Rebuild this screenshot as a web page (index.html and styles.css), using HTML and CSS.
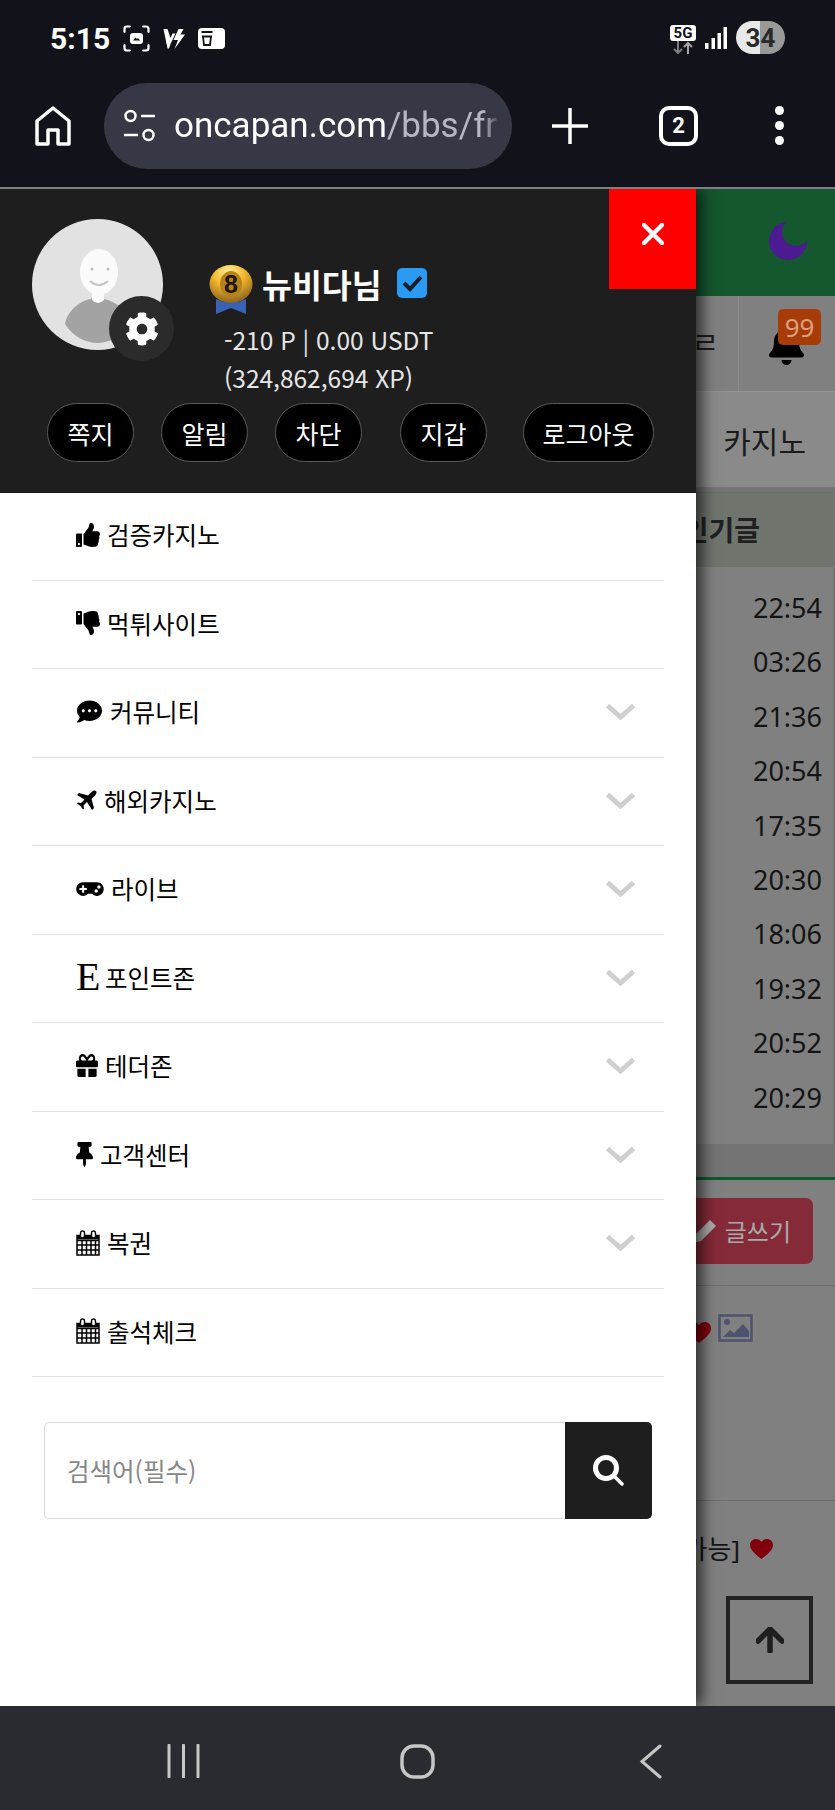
FILE: index.html
```html
<!DOCTYPE html>
<html lang="ko">
<head>
    <meta charset="UTF-8">
    <meta name="viewport" content="width=device-width, initial-scale=1.0">
    <title>oncapan</title>
    <link rel="stylesheet" href="styles.css">
</head>
<body>
    <svg class="defs" width="0" height="0">
        <symbol id="thumb" viewBox="0 0 512 512"><path d="M104 224H24c-13.255 0-24 10.745-24 24v240c0 13.255 10.745 24 24 24h80c13.255 0 24-10.745 24-24V248c0-13.255-10.745-24-24-24zM64 472c-13.255 0-24-10.745-24-24s10.745-24 24-24 24 10.745 24 24-10.745 24-24 24zM384 81.452c0 42.416-25.97 66.208-33.277 94.548h101.723c33.397 0 59.397 27.746 59.553 58.098.084 17.938-7.546 37.249-19.439 49.197l-.11.11c9.836 23.337 8.237 56.037-9.308 79.469 8.681 25.895-.069 57.704-16.382 74.757 4.298 17.598 2.244 32.575-6.148 44.632C440.202 511.587 389.616 512 346.839 512l-2.845-.001c-48.287-.017-87.806-17.598-119.56-31.725-15.957-7.099-36.821-15.887-52.651-16.178-6.54-.12-11.783-5.457-11.783-11.998v-213.77c0-3.2 1.282-6.271 3.558-8.521 39.614-39.144 56.648-80.587 89.117-113.111 14.804-14.832 20.188-37.236 25.393-58.902C282.515 39.293 291.817 0 312 0c24 0 72 8 72 81.452z"/></symbol>
        <symbol id="calendar" viewBox="0 0 24 26"><path d="M1 5.500h22v19.500H1z M1 10.500h22 M1 15h22 M1 20h22 M6 10.500V25 M10.500 10.500V25 M15 10.500V25 M19.500 10.500V25" fill="none" stroke="#000" stroke-width="1.500"/><path d="M1 5.500h22v4H1z" fill="#000"/><rect x="4.500" y="1" width="4" height="7" rx="2" fill="#fff" stroke="#000" stroke-width="1.400"/><rect x="15.500" y="1" width="4" height="7" rx="2" fill="#fff" stroke="#000" stroke-width="1.400"/></symbol>
        <symbol id="chevron" viewBox="0 0 31 17"><path d="M2.500 2.500L15.500 14 28.500 2.500" fill="none" stroke="#cfcfcf" stroke-width="5"/></symbol>
        <symbol id="heart" viewBox="0 0 24 21"><path d="M12 21C4 14.500 0 11 0 6.200 0 2.600 2.700 0 6.200 0 8.500 0 10.700 1.100 12 3 13.300 1.100 15.500 0 17.800 0 21.300 0 24 2.600 24 6.200 24 11 20 14.500 12 21z"/></symbol>
    </svg>

    <div class="statusbar">
        <div class="status-left">
            <span class="clock">5:15</span>
            <svg width="27" height="27" viewBox="0 0 27 27"><path d="M7 1.500H4Q1.500 1.500 1.500 4v3M20 1.500h3q2.500 0 2.500 2.500v3M7 25.500H4Q1.500 25.500 1.500 23v-3M20 25.500h3q2.500 0 2.500-2.500v-3" fill="none" stroke="#fff" stroke-width="2.200" stroke-linecap="round"/><rect x="7" y="8" width="13" height="11" rx="3" fill="#fff"/><path d="M10 15.500l2.500-3 1.500 1.500 1-1 2 2.500z" fill="#12131a"/></svg>
            <svg width="24" height="22" viewBox="0 0 23 22"><path d="M1 2h4l3 9 2-4.500 3 0-5 10.500-1.500 4.500H5z" fill="#fff"/><path d="M16 2h5l-3 5.500h4.500L12 22l3.500-9H11z" fill="#fff"/></svg>
            <svg width="27" height="21" viewBox="0 0 27 21"><rect width="27" height="21" rx="4" fill="#fff"/><path d="M3.500 4h11M4 8.500h10M5 8.500l1 8.500h6l1-8.500" fill="none" stroke="#12131a" stroke-width="1.800"/></svg>
        </div>
        <div class="status-right">
            <div class="net">
                <span class="net-5g">5G</span>
                <svg width="24" height="13" viewBox="0 0 24 13"><path d="M7 0v12M3 8l4 4 4-4" fill="none" stroke="#7c7c7c" stroke-width="2"/><path d="M17 13V2M13 6l4-4 4 4" fill="none" stroke="#a4a4a4" stroke-width="2"/></svg>
            </div>
            <svg width="22" height="22" viewBox="0 0 22 22"><path d="M0 16h3.500v6H0zM6.500 11H10v11H6.500zM12.500 6H16v16h-3.500zM18.500 0H22v22h-3.500z" fill="#fff"/></svg>
            <div class="battery"><span>34</span></div>
        </div>
    </div>

    <div class="toolbar">
        <svg width="36" height="40" viewBox="0 0 36 40"><path d="M2 38V15L18 2l16 13v23H23V24H13v14z" fill="none" stroke="#fff" stroke-width="3.500" stroke-linejoin="round"/></svg>
        <div class="urlbar">
            <svg width="31" height="34" viewBox="0 0 31 34"><circle cx="6.500" cy="7" r="5" fill="none" stroke="#fff" stroke-width="2.500"/><path d="M17 7h14M0 26h14" stroke="#fff" stroke-width="2.500"/><circle cx="24.500" cy="26" r="5" fill="none" stroke="#fff" stroke-width="2.500"/></svg>
            <div class="url"><span class="url-host">oncapan.com</span><span class="url-path">/bbs/fr</span></div>
        </div>
        <svg class="tb-plus" width="36" height="36" viewBox="0 0 36 36"><path d="M18 0v36M0 18h36" stroke="#fff" stroke-width="3.500" stroke-linecap="round"/></svg>
        <div class="tabs">2</div>
        <div class="dots"><i></i><i></i><i></i></div>
    </div>

    <div class="page">
        <div class="behind">
            <div class="site-head">
                <svg width="38" height="38" viewBox="0 0 38 38"><circle cx="19" cy="19" r="19" fill="#4c1a91"/><circle cx="27" cy="10" r="14" fill="#15572f"/></svg>
            </div>
            <div class="site-nav">
                <div class="nav-cell">ㄹ</div>
                <div class="nav-bell">
                    <svg width="37" height="40" viewBox="0 0 448 512"><path d="M224 512c35.32 0 63.97-28.65 63.97-64H160.03c0 35.35 28.65 64 63.97 64zm215.39-149.71c-19.32-20.76-55.47-51.99-55.47-154.29 0-77.7-54.48-139.9-127.94-155.16V32c0-17.67-14.32-32-31.98-32s-31.98 14.33-31.98 32v20.84C118.56 68.1 64.08 130.3 64.08 208c0 102.3-36.15 133.53-55.47 154.29-6 6.45-8.66 14.16-8.61 21.71.11 16.4 12.98 32 32.1 32h383.8c19.12 0 32-15.6 32.1-32 .05-7.55-2.61-15.27-8.61-21.71z"/></svg>
                    <span class="badge">99</span>
                </div>
            </div>
            <div class="site-cat">카지노</div>
            <div class="panel">
                <div class="panel-title">인기글</div>
                <div class="times">
                    <div>22:54</div>
                    <div>03:26</div>
                    <div>21:36</div>
                    <div>20:54</div>
                    <div>17:35</div>
                    <div>20:30</div>
                    <div>18:06</div>
                    <div>19:32</div>
                    <div>20:52</div>
                    <div>20:29</div>
                </div>
            </div>
            <div class="board">
                <div class="board-top">
                    <div class="write-btn">
                        <svg width="24" height="24" viewBox="0 0 24 24"><path d="M17 1l6 6L8 22l-8 2 2-8z" fill="#aaa"/></svg>
                        글쓰기
                    </div>
                </div>
                <div class="post post-first">
                    <svg class="heart" width="24" height="21"><use href="#heart"/></svg>
                    <svg width="35" height="28" viewBox="0 0 35 28"><rect x="1.500" y="1.500" width="32" height="25" fill="none" stroke="#4d536c" stroke-width="2.500"/><circle cx="9" cy="8" r="3" fill="#4d536c"/><path d="M5 23l7-7 4 3 9-9 6 7v6z" fill="#4d536c"/></svg>
                </div>
                <div class="post">
                    <span>[수정가능]</span>
                    <svg class="heart" width="23" height="20"><use href="#heart"/></svg>
                </div>
            </div>
        </div>

        <div class="top-btn">
            <svg width="28" height="26" viewBox="0 0 28 26"><path d="M14 2L2 14M14 2l12 12M14 3v21" fill="none" stroke="#1e1e1e" stroke-width="5.500" stroke-linecap="round" stroke-linejoin="round"/></svg>
        </div>

        <aside class="drawer">
            <div class="drawer-head">
                <a class="close-btn"><svg width="22" height="22" viewBox="0 0 22 22"><path d="M2 2l18 18M20 2L2 20" stroke="#fff" stroke-width="4.500" stroke-linecap="round"/></svg></a>
                <div class="profile">
                    <div class="avatar">
                        <svg width="131" height="131" viewBox="0 0 131 131">
                            <circle cx="65.500" cy="65.500" r="65.500" fill="#e2e2e2"/>
                            <path d="M33 105c2-14 18-26 32-26s32 12 34 26c-10 14-24 19-34 19s-24-6-32-19z" fill="#a3a3a3"/>
                            <path d="M60 70h12v11q-6 6-12 0z" fill="#fbfbfb"/>
                            <ellipse cx="67" cy="53" rx="19" ry="23" fill="#fbfbfb"/>
                            <circle cx="60" cy="50" r="1.500" fill="#bbb"/><circle cx="76" cy="50" r="1.500" fill="#bbb"/>
                            <path d="M58 62q9 8 18 0" fill="none" stroke="#c4c4c4" stroke-width="2"/>
                        </svg>
                        <div class="gear">
                            <svg width="34" height="34" viewBox="0 0 512 512"><path fill="#fff" d="M487.4 315.7l-42.6-24.6c4.3-23.2 4.3-47 0-70.2l42.6-24.6c4.9-2.8 7.1-8.6 5.5-14-11.1-35.6-30-67.8-54.7-94.6-3.8-4.1-10-5.1-14.8-2.3L380.800 110c-17.900-15.400-38.500-27.300-60.800-35.100V25.800c0-5.600-3.900-10.500-9.400-11.700-36.700-8.200-74.300-7.800-109.200 0-5.500 1.200-9.400 6.100-9.400 11.700V75c-22.200 7.900-42.800 19.800-60.800 35.100L88.700 85.500c-4.900-2.800-11-1.900-14.800 2.300-24.700 26.700-43.600 58.900-54.700 94.600-1.700 5.400.6 11.200 5.500 14L67.300 221c-4.300 23.200-4.300 47 0 70.200l-42.600 24.600c-4.900 2.800-7.100 8.600-5.500 14 11.100 35.600 30 67.800 54.700 94.600 3.800 4.100 10 5.100 14.800 2.300l42.600-24.600c17.900 15.400 38.500 27.300 60.800 35.100v49.200c0 5.600 3.900 10.500 9.400 11.700 36.700 8.200 74.300 7.800 109.200 0 5.500-1.200 9.400-6.100 9.400-11.700v-49.200c22.200-7.900 42.800-19.800 60.800-35.100l42.600 24.600c4.900 2.800 11 1.900 14.800-2.300 24.700-26.700 43.600-58.900 54.700-94.600 1.500-5.500-.7-11.300-5.600-14.100zM256 336c-44.100 0-80-35.900-80-80s35.900-80 80-80 80 35.900 80 80-35.900 80-80 80z"/></svg>
                        </div>
                    </div>
                    <div class="user">
                        <div class="user-name">
                            <svg class="medal" width="44" height="50" viewBox="0 0 44 50">
                                <defs><radialGradient id="gold" cx="45%" cy="20%" r="80%"><stop offset="0" stop-color="#fff3a0"/><stop offset=".45" stop-color="#f4b82c"/><stop offset="1" stop-color="#8a6420"/></radialGradient></defs>
                                <path d="M7 34l8 3h14l8-3v15l-15-6-15 6z" fill="#3a62b4"/>
                                <ellipse cx="22" cy="19" rx="21.500" ry="19" fill="url(#gold)"/>
                                <ellipse cx="22" cy="19" rx="11" ry="13" fill="#b8821a"/>
                                <text x="22" y="28" class="medal-num">8</text>
                            </svg>
                            <span>뉴비다님</span>
                            <svg class="verified" width="30" height="30" viewBox="0 0 30 30"><rect width="30" height="30" rx="5" fill="#2b9af3"/><path d="M7 15l6 6L24 9" fill="none" stroke="#14202c" stroke-width="4"/></svg>
                        </div>
                        <div class="user-stats">
                            <div>-210 P | 0.00 USDT</div>
                            <div>(324,862,694 XP)</div>
                        </div>
                    </div>
                </div>
                <div class="pills">
                    <a class="pill">쪽지</a>
                    <a class="pill">알림</a>
                    <a class="pill">차단</a>
                    <a class="pill pill-wallet">지갑</a>
                    <a class="pill pill-out">로그아웃</a>
                </div>
            </div>

            <ul class="menu">
                <li><svg width="24" height="24"><use href="#thumb"/></svg>검증카지노</li>
                <li><svg class="flip" width="24" height="24"><use href="#thumb"/></svg>먹튀사이트</li>
                <li><svg width="27" height="25" viewBox="0 0 512 512"><path d="M256 32C114.6 32 0 125.1 0 240c0 49.6 21.4 95 57 130.7C44.5 421.1 2.7 466 2.2 466.5c-2.2 2.3-2.8 5.7-1.500 8.700S4.800 480 8 480c66.300 0 116-31.800 140.600-51.400 32.700 12.300 69 19.400 107.400 19.400 141.400 0 256-93.100 256-208S397.400 32 256 32zM128 272c-17.700 0-32-14.300-32-32s14.300-32 32-32 32 14.300 32 32-14.300 32-32 32zm128 0c-17.700 0-32-14.300-32-32s14.300-32 32-32 32 14.300 32 32-14.300 32-32 32zm128 0c-17.700 0-32-14.300-32-32s14.300-32 32-32 32 14.300 32 32-14.300 32-32 32z"/></svg>커뮤니티<svg class="chev" width="31" height="17"><use href="#chevron"/></svg></li>
                <li><svg width="21" height="21" viewBox="0 0 21 21"><path d="M20 1c-1-1-3-.5-4.500 1L12 5.500 3 3 1 5l7.500 4.500-3.500 3.500-3-.5-1 1 3.500 2.500 2.500 3.500 1-1-.5-3 3.500-3.500L16 20l2-2-2.500-9L19 5.500C20.500 4 21 2 20 1z"/></svg>해외카지노<svg class="chev" width="31" height="17"><use href="#chevron"/></svg></li>
                <li><svg width="28" height="22" viewBox="0 0 640 512"><path d="M480.070 96H160a160 160 0 1 0 114.240 272h91.520A160 160 0 1 0 480.070 96zM248 268a12 12 0 0 1-12 12h-52v52a12 12 0 0 1-12 12h-24a12 12 0 0 1-12-12v-52H84a12 12 0 0 1-12-12v-24a12 12 0 0 1 12-12h52v-52a12 12 0 0 1 12-12h24a12 12 0 0 1 12 12v52h52a12 12 0 0 1 12 12zm216 76a40 40 0 1 1 40-40 40 40 0 0 1-40 40zm64-96a40 40 0 1 1 40-40 40 40 0 0 1-40 40z"/></svg>라이브<svg class="chev" width="31" height="17"><use href="#chevron"/></svg></li>
                <li><span class="letter-icon">E</span>포인트존<svg class="chev" width="31" height="17"><use href="#chevron"/></svg></li>
                <li><svg width="22" height="23" viewBox="0 32 512 448" preserveAspectRatio="none"><path d="M32 448c0 17.700 14.300 32 32 32h160V320H32v128zm256 32h160c17.700 0 32-14.300 32-32V320H288v160zm192-320h-42.100c6.200-12.100 10.100-25.500 10.100-40 0-48.500-39.500-88-88-88-41.600 0-68.500 21.300-103 68.300-34.500-47-61.400-68.300-103-68.300-48.500 0-88 39.500-88 88 0 14.500 3.800 27.900 10.100 40H32c-17.700 0-32 14.300-32 32v80c0 8.800 7.200 16 16 16h480c8.800 0 16-7.200 16-16v-80c0-17.700-14.300-32-32-32zm-326.100 0c-22.100 0-40-17.900-40-40s17.900-40 40-40c19.900 0 34.600 3.300 86.100 80h-86.100zm206.100 0h-86.100c51.400-76.500 65.700-80 86.100-80 22.100 0 40 17.900 40 40s-17.900 40-40 40z"/></svg>테더존<svg class="chev" width="31" height="17"><use href="#chevron"/></svg></li>
                <li><svg width="17" height="25" viewBox="0 0 384 512" preserveAspectRatio="none"><path d="M298.028 214.267L285.793 96H328c13.255 0 24-10.745 24-24V24c0-13.255-10.745-24-24-24H56C42.745 0 32 10.745 32 24v48c0 13.255 10.745 24 24 24h42.207L85.972 214.267C37.465 236.820 0 277.261 0 328c0 13.255 10.745 24 24 24h136v104.007c0 1.242.289 2.467.845 3.578l24 48c2.941 5.882 11.364 5.893 14.311 0l24-48a8.008 8.008 0 0 0 .845-3.578V352h136c13.255 0 24-10.745 24-24-.001-51.183-37.983-91.420-85.973-113.733z"/></svg>고객센터<svg class="chev" width="31" height="17"><use href="#chevron"/></svg></li>
                <li><svg width="24" height="26"><use href="#calendar"/></svg>복권<svg class="chev" width="31" height="17"><use href="#chevron"/></svg></li>
                <li><svg width="24" height="26"><use href="#calendar"/></svg>출석체크</li>
            </ul>

            <form class="search">
                <input class="search-input" type="text" placeholder="검색어(필수)">
                <button class="search-btn" type="button">
                    <svg width="31" height="31" viewBox="0 0 31 31"><circle cx="13" cy="13" r="10.500" fill="none" stroke="#fff" stroke-width="5"/><path d="M21 21l8 8" stroke="#fff" stroke-width="3.500" stroke-linecap="round"/></svg>
                </button>
            </form>
        </aside>
    </div>

    <div class="navbar">
        <svg width="33" height="34" viewBox="0 0 33 34"><path d="M2 1v32M16.500 1v32M31 1v32" stroke="#c6c6c6" stroke-width="3" stroke-linecap="round"/></svg>
        <svg class="nav-home" width="35" height="35" viewBox="0 0 35 35"><rect x="2" y="2" width="31" height="31" rx="12" fill="none" stroke="#c6c6c6" stroke-width="3.500"/></svg>
        <svg width="23" height="35" viewBox="0 0 23 35"><path d="M21 2L3 17.500 21 33" fill="none" stroke="#c6c6c6" stroke-width="3" stroke-linecap="round"/></svg>
    </div>
</body>
</html>
```

FILE: styles.css
```css
* {
    box-sizing: border-box;
}
body {
    margin: 0;
    width: 835px;
    height: 1810px;
    overflow: hidden;
    display: flex;
    flex-direction: column;
    background: #12131a;
    font-family: "Noto Sans", "Noto Sans CJK KR", sans-serif;
    color: #000;
}
.defs {
    position: absolute;
}

/* Phone status bar */
.statusbar {
    height: 68px;
    padding: 21px 50px 0 50px;
    display: flex;
    justify-content: space-between;
    align-items: flex-start;
}
.status-left {
    display: flex;
    align-items: center;
    gap: 12px;
    height: 34px;
}
.clock {
    font-family: Roboto, sans-serif;
    font-weight: 700;
    font-size: 30px;
    color: #fff;
    margin-right: 1px;
}
.status-right {
    display: flex;
    align-items: center;
    gap: 9px;
    height: 33px;
}
.net {
    display: flex;
    flex-direction: column;
    align-items: center;
    margin-top: 3px;
}
.net-5g {
    background: #fff;
    color: #12131a;
    border-radius: 3px;
    font-family: Roboto, sans-serif;
    font-weight: 700;
    font-size: 15px;
    line-height: 16px;
    width: 26px;
    text-align: center;
}
.battery {
    width: 49px;
    height: 33px;
    border-radius: 17px;
    background: linear-gradient(90deg, #e8e8e8 50%, #999 50%);
    display: flex;
    align-items: center;
    justify-content: center;
    font-family: Roboto, sans-serif;
    font-weight: 700;
    font-size: 26px;
    color: #2a2a2a;
}

/* Browser toolbar */
.toolbar {
    height: 121px;
    padding: 15px 0 19px 35px;
    display: flex;
    align-items: center;
    border-bottom: 2px solid #7d7e86;
}
.urlbar {
    width: 408px;
    height: 86px;
    margin-left: 33px;
    padding-left: 20px;
    border-radius: 43px;
    background: #363945;
    display: flex;
    align-items: center;
    gap: 20px;
    flex: none;
}
.url {
    width: 326px;
    white-space: nowrap;
    font-family: Roboto, sans-serif;
    font-size: 35px;
    margin-left: -1px;
    -webkit-mask-image: linear-gradient(90deg, #000 95%, transparent);
    mask-image: linear-gradient(90deg, #000 95%, transparent);
}
.url-host {
    color: #fff;
}
.url-path {
    color: #b4b7c4;
}
.tb-plus {
    margin-left: 40px;
    flex: none;
}
.tabs {
    width: 39px;
    height: 40px;
    margin-left: 71px;
    border: 4px solid #fff;
    border-radius: 10px;
    color: #fff;
    font-family: Roboto, sans-serif;
    font-weight: 700;
    font-size: 22px;
    display: flex;
    align-items: center;
    justify-content: center;
    flex: none;
}
.dots {
    margin-left: 77px;
    display: flex;
    flex-direction: column;
    gap: 6px;
}
.dots i {
    display: block;
    width: 9px;
    height: 9px;
    border-radius: 50%;
    background: #fff;
}

/* Page under the drawer */
.page {
    position: relative;
    flex: 1;
    overflow: hidden;
    background: #747474;
}
.site-head {
    height: 107px;
    background: #15572f;
    display: flex;
    justify-content: flex-end;
    padding: 33px 28px 0 0;
}
.site-nav {
    height: 96px;
    display: flex;
    justify-content: flex-end;
    background: #808080;
    border-bottom: 1px solid #939393;
}
.nav-cell {
    padding: 0 19px 8px 0;
    display: flex;
    align-items: center;
    font-size: 30px;
    color: #1c1c1c;
}
.nav-bell {
    position: relative;
    width: 97px;
    border-left: 1px solid #8c8c8c;
}
.nav-bell svg {
    position: absolute;
    left: 29px;
    top: 29px;
}
.badge {
    position: absolute;
    left: 39px;
    top: 13px;
    width: 43px;
    height: 36px;
    border-radius: 5px;
    background: #a83c08;
    color: #dd9f80;
    font-size: 26px;
    line-height: 36px;
    text-align: center;
}
.site-cat {
    height: 95px;
    background: #8a8a8a;
    display: flex;
    align-items: center;
    justify-content: flex-end;
    padding-right: 29px;
    font-size: 30px;
    color: #1a1a1a;
}
.panel {
    margin: 5px 2px 0 0;
}
.panel-title {
    height: 75px;
    background: #6f746d;
    display: flex;
    align-items: center;
    justify-content: flex-end;
    padding: 0 73px 3px 0;
    font-weight: 700;
    font-size: 28px;
    color: #202020;
    border-top: 1px solid #6b6f6c;
}
.times {
    padding: 14px 11px 19px 0;
    background: #808080;
    text-align: right;
    font-size: 27px;
    color: #141414;
}
.times div {
    height: 54.4px;
    line-height: 54.4px;
}
.board {
    margin-top: 33px;
    background: #808080;
    border-top: 3px solid #0e5a2e;
}
.board-top {
    height: 106px;
    border-bottom: 1px solid #6e6e6e;
    padding: 18px 22px 0 0;
    display: flex;
    justify-content: flex-end;
    align-items: flex-start;
}
.write-btn {
    width: 130px;
    height: 66px;
    background: #852a39;
    border-radius: 7px;
    color: #aaa;
    font-size: 24px;
    display: flex;
    align-items: center;
    gap: 8px;
    white-space: nowrap;
    justify-content: flex-end;
    padding-right: 22px;
}
.post {
    height: 206px;
    padding: 30px 62px 0 0;
    display: flex;
    justify-content: flex-end;
    align-items: flex-start;
    gap: 10px;
    font-size: 26px;
    color: #141414;
}
.post-first {
    height: 215px;
    padding: 28px 82px 0 0;
    border-bottom: 1px solid #6e6e6e;
    gap: 7px;
}
.post span {
    line-height: 36px;
}
.heart {
    fill: #80000c;
    margin-top: 8px;
}
.top-btn {
    position: absolute;
    right: 22px;
    bottom: 22px;
    width: 87px;
    height: 88px;
    border: 4px solid #222;
    display: flex;
    align-items: center;
    justify-content: center;
}

/* Side drawer */
.drawer {
    position: absolute;
    left: 0;
    top: 0;
    bottom: 0;
    width: 696px;
    background: #fff;
    box-shadow: 6px 0 14px rgba(0, 0, 0, 0.65);
}
.drawer-head {
    position: relative;
    height: 304px;
    background: #1e1e1e;
    padding: 30px 0 0 32px;
}
.close-btn {
    position: absolute;
    right: 0;
    top: 0;
    width: 87px;
    height: 100px;
    background: #ff0000;
    display: flex;
    align-items: center;
    justify-content: center;
    padding-bottom: 10px;
}
.profile {
    display: flex;
    align-items: flex-start;
}
.avatar {
    position: relative;
    width: 131px;
    height: 131px;
}
.avatar > svg {
    display: block;
}
.gear {
    position: absolute;
    left: 77px;
    top: 77px;
    width: 65px;
    height: 65px;
    border-radius: 50%;
    background: #2b2b2b;
    display: flex;
    align-items: center;
    justify-content: center;
}
.user {
    margin: 38px 0 0 46px;
}
.user-name {
    display: flex;
    align-items: center;
    height: 52px;
    color: #fff;
    font-family: "Noto Sans CJK KR", sans-serif;
    font-weight: 700;
    font-size: 32.5px;
    gap: 9px;
}
.medal {
    margin-top: 14px;
}
.verified {
    margin-left: 6px;
}
.medal-num {
    font-family: "Liberation Sans", sans-serif;
    font-weight: 700;
    font-size: 25px;
    text-anchor: middle;
    fill: #201400;
}
.user-stats {
    margin: 12px 0 0 15px;
    color: #e6e6e6;
    font-family: "Noto Sans CJK KR", sans-serif;
    font-size: 24.5px;
    line-height: 38px;
}
.pills {
    margin: 6px 0 0 15px;
    display: flex;
    gap: 27px;
}
.pill {
    width: 87px;
    height: 59px;
    border-radius: 30px;
    border: 1px solid #5a5a5a;
    background: #000;
    color: #fff;
    font-family: "Noto Sans CJK KR", sans-serif;
    font-size: 25px;
    display: flex;
    align-items: center;
    justify-content: center;
}
.pill-wallet {
    margin-left: 11px;
}
.pill-out {
    width: 131px;
    margin-left: 9px;
}
.menu {
    list-style: none;
    margin: -1px 32px 0;
    padding: 0;
}
.menu li {
    height: 88.5px;
    padding: 0 0 2px 44px;
    border-bottom: 1.5px solid #e2e2e2;
    display: flex;
    align-items: center;
    gap: 7px;
    font-family: "Noto Sans CJK KR", sans-serif;
    font-size: 24.5px;
}
.flip {
    transform: scaleY(-1);
}
.letter-icon {
    width: 22px;
    font-family: "Liberation Serif", serif;
    font-size: 40px;
    line-height: 40px;
}
.chev {
    margin-left: auto;
    margin-right: 28px;
}
.search {
    margin: 45px 44px 0 44px;
    height: 97px;
    display: flex;
}
.search-input {
    flex: 1;
    min-width: 0;
    height: 97px;
    padding: 0 22px;
    border: 1px solid #dcdcdc;
    border-right: 0;
    border-radius: 5px 0 0 5px;
    outline: none;
    font-family: "Noto Sans CJK KR", sans-serif;
    font-size: 24.5px;
}
.search-input::placeholder {
    color: #888;
}
.search-btn {
    width: 87px;
    height: 97px;
    border: 0;
    padding: 0;
    background: #1e1e1e;
    border-radius: 0 5px 5px 0;
    display: flex;
    align-items: center;
    justify-content: center;
}

/* Phone nav buttons */
.navbar {
    height: 104px;
    background: #2a2b30;
    flex: none;
    display: flex;
    align-items: center;
    padding: 6px 173px 0 167px;
    justify-content: space-between;
}
.nav-home {
    margin-right: 4px;
}
```
